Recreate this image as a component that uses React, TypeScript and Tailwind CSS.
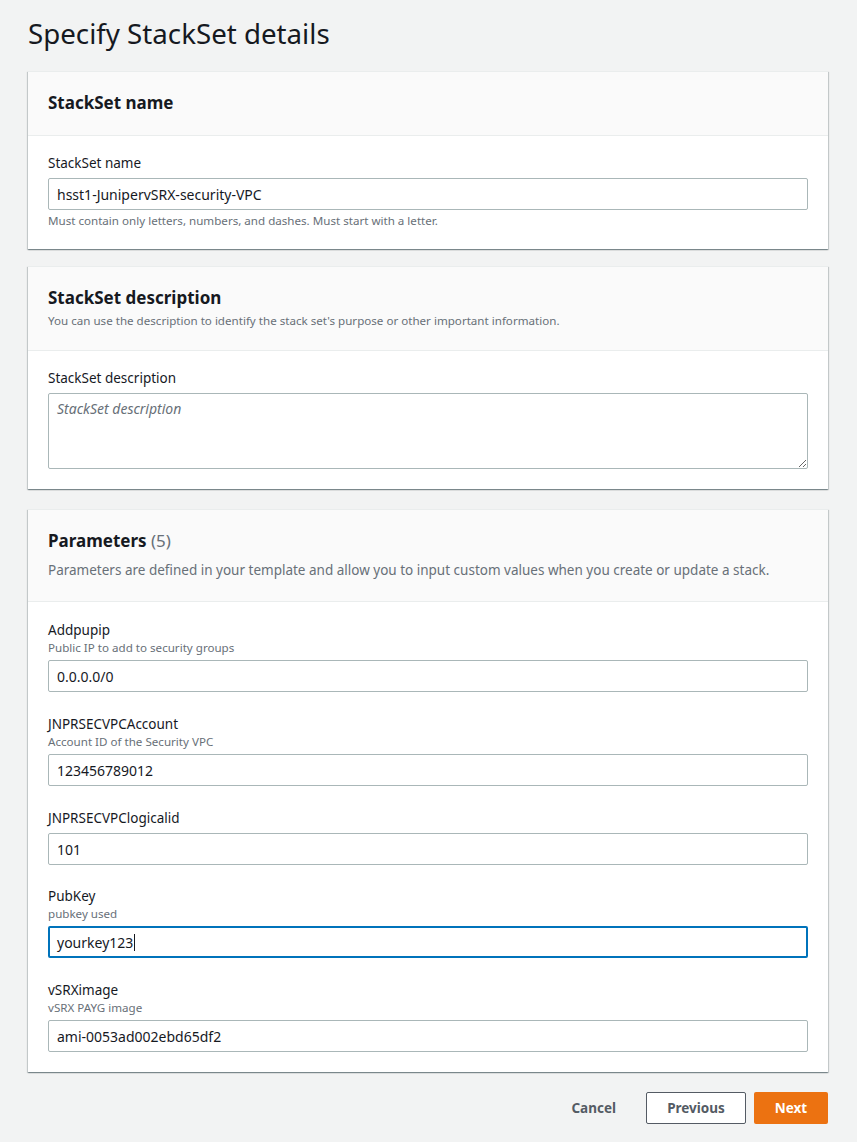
import { ReactNode } from "react";

const font = { fontFamily: '"Noto Sans", "Open Sans", sans-serif' };

interface CardProps {
  title: ReactNode;
  description?: ReactNode;
  children: ReactNode;
  className?: string;
  bodyClass?: string;
}

const Card = ({ title, description, children, className, bodyClass }: CardProps) => (
  <div
    className={`bg-white border-t border-[#eaeded] shadow-[0_1px_1px_0_rgba(0,28,36,0.3),1px_1px_1px_0_rgba(0,28,36,0.15),-1px_1px_1px_0_rgba(0,28,36,0.15)] ${className ?? ""}`}
  >
    <div className="bg-[#fafafa] border-b border-[#eaeded] px-5 pt-[20px] pb-[21px]">
      <h2 className="text-[17px] leading-[22px] font-bold text-[#16191f]">{title}</h2>
      {description}
    </div>
    <div className={`px-5 flex flex-col ${bodyClass ?? "pt-[16px] pb-[20px] gap-5"}`}>{children}</div>
  </div>
);

interface FieldProps {
  label: string;
  desc?: string;
  children: ReactNode;
  className?: string;
}

const Field = ({ label, desc, children, className }: FieldProps) => (
  <div className={className}>
    <div className="text-[13.5px] leading-[22px] text-[#16191f]">{label}</div>
    {desc && <div className="text-[11.6px] leading-[16px] text-[#687078] -mt-[1px] mb-[1px]">{desc}</div>}
    <div className="mt-[4px]">{children}</div>
  </div>
);

const TextInput = ({ value }: { value: string }) => (
  <input
    readOnly
    value={value}
    className="block w-full h-[32px] px-[8px] border border-[#aab7b8] rounded-[2px] text-[14px] text-[#16191f] bg-white outline-none"
    style={font}
  />
);

const params = [
  { label: "Addpupip", desc: "Public IP to add to security groups", value: "0.0.0.0/0" },
  { label: "JNPRSECVPCAccount", desc: "Account ID of the Security VPC", value: "123456789012" },
  { label: "JNPRSECVPClogicalid", value: "101" },
];

export default function App() {
  return (
    <div className="min-h-[1142px] bg-[#f2f3f3] px-[28px] pt-[15px] pb-[18px]" style={font}>
      <div className="w-[800px]">
        <h1 className="text-[27.7px] leading-[36px] font-normal text-[#16191f] mb-[20px]">Specify StackSet details</h1>

        <Card title="StackSet name">
          <div>
            <div className="text-[13.5px] leading-[22px] text-[#16191f]">StackSet name</div>
            <div className="mt-[4px]">
              <TextInput value="hsst1-JunipervSRX-security-VPC" />
            </div>
            <div className="mt-[3px] text-[11.6px] leading-[16px] text-[#687078]">
              Must contain only letters, numbers, and dashes. Must start with a letter.
            </div>
          </div>
        </Card>

        <Card
          className="mt-[17px]"
          title="StackSet description"
          description={
            <div className="mt-[4px] text-[11.6px] leading-[16px] text-[#687078]">
              You can use the description to identify the stack set's purpose or other important information.
            </div>
          }
        >
          <Field label="StackSet description">
            <textarea
              readOnly
              placeholder="StackSet description"
              className="block w-full h-[76px] px-[8px] py-[4px] border border-[#aab7b8] rounded-[2px] text-[14px] leading-[22px] text-[#16191f] placeholder:italic placeholder:text-[#687078] outline-none"
              style={font}
            />
          </Field>
        </Card>

        <Card
          className="mt-[20px]"
          bodyClass="pt-[17px] pb-[20px] gap-[21px]"
          title={
            <>
              Parameters <span className="font-normal text-[#687078]">(5)</span>
            </>
          }
          description={
            <div className="mt-[8px] text-[13.5px] leading-[20px] text-[#687078]">
              Parameters are defined in your template and allow you to input custom values when you create or update a stack.
            </div>
          }
        >
          {params.map((p) => (
            <Field key={p.label} label={p.label} desc={p.desc}>
              <TextInput value={p.value} />
            </Field>
          ))}
          <Field label="PubKey" desc="pubkey used" className="-mt-[1px]">
            <div className="w-full h-[32px] px-[8px] border-2 border-[#0073bb] rounded-[2px] flex items-center text-[14px] text-[#16191f] bg-white">
              <span className="-ml-[1px]">yourkey123</span>
              <span className="w-px h-[17px] bg-[#16191f] ml-[1px]" />
            </div>
          </Field>
          <Field label="vSRXimage" desc="vSRX PAYG image">
            <TextInput value="ami-0053ad002ebd65df2" />
          </Field>
        </Card>

        <div className="mt-[20px] flex justify-end items-center">
          <button className="h-[32px] px-[20px] text-[13.5px] font-bold text-[#545b64]">Cancel</button>
          <button className="ml-[10px] h-[32px] w-[100px] border border-[#545b64] rounded-[2px] bg-white text-[13.5px] font-bold text-[#545b64]">
            Previous
          </button>
          <button className="ml-[8px] h-[32px] w-[74px] rounded-[2px] bg-[#ec7211] text-[13.5px] font-bold text-white">
            Next
          </button>
        </div>
      </div>
    </div>
  );
}
